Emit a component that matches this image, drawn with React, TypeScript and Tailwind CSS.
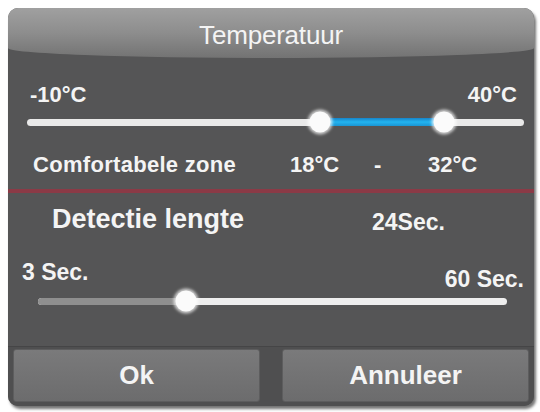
import React from 'react';

const font = { fontFamily: '"Liberation Sans", Arial, sans-serif' };

function Thumb({ left }: { left: number }) {
  return (
    <div
      className="absolute top-1/2 w-[21px] h-[21px] -translate-x-1/2 -translate-y-1/2 rounded-full bg-[#fbfbfb] shadow-[0_0_3px_2px_rgba(255,255,255,0.7)]"
      style={{ left }}
    />
  );
}

export default function App() {
  return (
    <div className="w-[540px] h-[412px] bg-white pt-[8px] pl-[8px]" style={font}>
      <div className="w-[526px] h-[398px] rounded-[10px] bg-[#555556] flex flex-col overflow-hidden shadow-[2px_3px_3px_rgba(0,0,0,0.55)] text-[#f4f4f4]">
        {/* header */}
        <div className="h-[50px] shrink-0 flex items-start justify-center pt-[12px] bg-gradient-to-b from-[#a0a0a0] via-[#8d8d8d] to-[#737373] rounded-b-[50%_10px]">
          <span className="text-[26px] leading-[30px] tracking-[-0.2px]">Temperatuur</span>
        </div>

        {/* range labels */}
        <div className="mt-[23px] h-[26px] flex items-center justify-between pl-[22px] pr-[17px] font-bold text-[22px]">
          <span>-10°C</span>
          <span>40°C</span>
        </div>

        {/* temperature slider */}
        <div className="mt-[8px] h-[14px] pl-[19px] pr-[10px] flex items-center">
          <div className="relative w-full h-[7px] rounded-full bg-[#e9e9e9]">
            <div className="absolute top-[-0.5px] h-[8px] left-[293px] w-[124px] bg-gradient-to-b from-[#1784c8] via-[#22b4f0] to-[#1a95d4]" />
            <Thumb left={293} />
            <Thumb left={417} />
          </div>
        </div>

        {/* comfort zone */}
        <div className="mt-[22px] h-[26px] flex items-center font-bold text-[22px] pl-[25px]">
          <span className="w-[257px] tracking-[0.3px]">Comfortabele zone</span>
          <span className="w-[84px]">18°C</span>
          <span className="w-[54px]">-</span>
          <span>32°C</span>
        </div>

        {/* divider */}
        <div className="mt-[12px] h-[4px] bg-[#8b3a46]" />

        {/* detection length */}
        <div className="mt-[10px] h-[32px] flex items-center font-bold pl-[44px]">
          <span className="w-[320px] text-[27px]">Detectie lengte</span>
          <span className="text-[23px] mt-[6px]">24Sec.</span>
        </div>

        {/* seconds labels */}
        <div className="mt-[24px] h-[30px] flex items-start justify-between pl-[14px] pr-[10px] font-bold text-[23px] leading-[26px]">
          <span>3 Sec.</span>
          <span className="mt-[7px]">60 Sec.</span>
        </div>

        {/* seconds slider */}
        <div className="mt-[5px] h-[14px] pl-[30px] pr-[27px] flex items-center">
          <div className="relative w-full h-[7px] rounded-full bg-[#eeeeee]">
            <div className="absolute top-0 left-0 h-full w-[148px] rounded-l-full bg-[#8f8f8f]" />
            <Thumb left={148} />
          </div>
        </div>

        {/* buttons */}
        <div className="mt-auto h-[60px] flex gap-[22px] px-[5px] pt-[2px] pb-[4px] bg-[#4f4f50] border-t border-[#454546]">
          <button className="flex-1 rounded-[3px] bg-gradient-to-b from-[#7a7a7b] to-[#6c6c6d] border border-[#5d5d5e] font-bold text-[26px] text-[#f4f4f4]">
            Ok
          </button>
          <button className="flex-1 rounded-[3px] bg-gradient-to-b from-[#7a7a7b] to-[#6c6c6d] border border-[#5d5d5e] font-bold text-[26px] text-[#f4f4f4]">
            Annuleer
          </button>
        </div>
      </div>
    </div>
  );
}
